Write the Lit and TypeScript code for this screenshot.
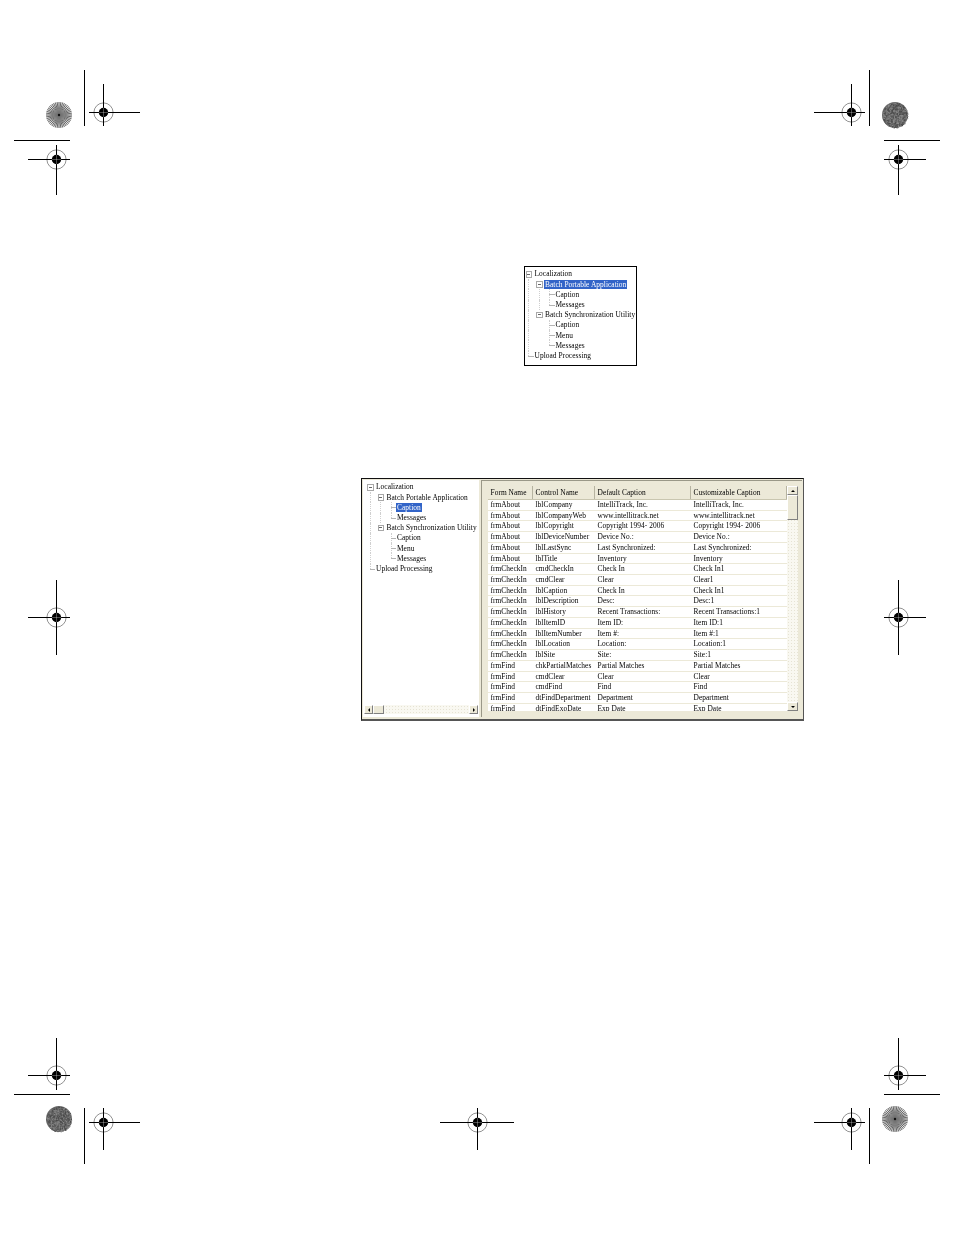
import { LitElement, html, css, svg } from "lit";
import { customElement, property } from "lit/decorators.js";

type Cell = "v" | "t" | "l" | "box" | "e";
interface TreeRow { cells: Cell[]; label: string; sel?: boolean; }

const cols = (sel: "portable" | "caption"): TreeRow[] => [
  { cells: ["box"], label: "Localization" },
  { cells: ["v", "box"], label: "Batch Portable Application", sel: sel === "portable" },
  { cells: ["v", "v", "t"], label: "Caption", sel: sel === "caption" },
  { cells: ["v", "v", "l"], label: "Messages" },
  { cells: ["v", "box"], label: "Batch Synchronization Utility" },
  { cells: ["v", "e", "t"], label: "Caption" },
  { cells: ["v", "e", "t"], label: "Menu" },
  { cells: ["v", "e", "l"], label: "Messages" },
  { cells: ["l"], label: "Upload Processing" },
];

@customElement("tree-view")
class TreeView extends LitElement {
  @property({ attribute: false }) rows: TreeRow[] = [];
  static styles = css`
    :host { display: block; font: 7.4px/10.2px "Liberation Serif", serif; color: #000; white-space: nowrap; letter-spacing: .05px; }
    .row { display: flex; height: 10.2px; align-items: center; }
    .cell { width: 10.5px; height: 100%; flex: none; position: relative; }
    .cell::before, .cell::after { content: ""; position: absolute; }
    .v::before, .t::before { left: 5px; top: 0; bottom: 0; border-left: 1px dotted #cfcfcf; }
    .l::before { left: 5px; top: 0; height: 50%; border-left: 1px dotted #cfcfcf; }
    .t::after, .l::after { left: 5px; right: 0; top: 50%; border-top: 1px solid #b4b4b4; }
    .box::before { left: 2.5px; top: 2px; width: 4.5px; height: 4.5px; border: .7px solid #a8a8a8; background: #fff; }
    .box::after { left: 4px; top: 4.6px; width: 3px; height: .8px; background: #666; }
    .label { padding: 0 1px; line-height: 9.4px; }
    .sel { background: #3264c8; color: #fff; }
  `;
  render() {
    return this.rows.map(r => html`<div class="row">
      ${r.cells.map(c => html`<span class="cell ${c}"></span>`)}
      <span class="label ${r.sel ? "sel" : ""}">${r.label}</span>
    </div>`);
  }
}

const DATA: string[][] = [
  ["frmAbout", "lblCompany", "IntelliTrack, Inc.", "IntelliTrack, Inc."],
  ["frmAbout", "lblCompanyWeb", "www.intellitrack.net", "www.intellitrack.net"],
  ["frmAbout", "lblCopyright", "Copyright 1994- 2006", "Copyright 1994- 2006"],
  ["frmAbout", "lblDeviceNumber", "Device No.:", "Device No.:"],
  ["frmAbout", "lblLastSync", "Last Synchronized:", "Last Synchronized:"],
  ["frmAbout", "lblTitle", "Inventory", "Inventory"],
  ["frmCheckIn", "cmdCheckIn", "Check In", "Check In1"],
  ["frmCheckIn", "cmdClear", "Clear", "Clear1"],
  ["frmCheckIn", "lblCaption", "Check In", "Check In1"],
  ["frmCheckIn", "lblDescription", "Desc:", "Desc:1"],
  ["frmCheckIn", "lblHistory", "Recent Transactions:", "Recent Transactions:1"],
  ["frmCheckIn", "lblItemID", "Item ID:", "Item ID:1"],
  ["frmCheckIn", "lblItemNumber", "Item #:", "Item #:1"],
  ["frmCheckIn", "lblLocation", "Location:", "Location:1"],
  ["frmCheckIn", "lblSite", "Site:", "Site:1"],
  ["frmFind", "chkPartialMatches", "Partial Matches", "Partial Matches"],
  ["frmFind", "cmdClear", "Clear", "Clear"],
  ["frmFind", "cmdFind", "Find", "Find"],
  ["frmFind", "dtFindDepartment", "Department", "Department"],
  ["frmFind", "dtFindExoDate", "Exp Date", "Exp Date"],
];

@customElement("print-marks")
class PrintMarks extends LitElement {
  static styles = css`
    :host { position: absolute; inset: 0; pointer-events: none; }
    svg { display: block; }
  `;
  reg(cx: number, cy: number, x1: number, x2: number, y1: number, y2: number) {
    return svg`
      <circle cx=${cx} cy=${cy} r="9.6" fill="none" stroke="#777" stroke-width=".8"/>
      <circle cx=${cx} cy=${cy} r="4.7" fill="#000"/>
      <path d="M${x1} ${cy}H${x2}M${cx} ${y1}V${y2}" stroke="#000" stroke-width="1" fill="none"/>
      <path d="M${cx - 4.7} ${cy}H${cx + 4.7}M${cx} ${cy - 4.7}V${cy + 4.7}" stroke="#fff" stroke-width=".3" fill="none"/>`;
  }
  spokes(cx: number, cy: number) {
    const out = [];
    const n = 44;
    for (let i = 0; i < n; i++) {
      const a = (i / n) * Math.PI * 2;
      const x = cx + Math.cos(a) * 13, y = cy + Math.sin(a) * 13;
      out.push(svg`<line x1=${cx} y1=${cy} x2=${x} y2=${y} stroke="#303030" stroke-width=".7"/>`);
    }
    return svg`<circle cx=${cx} cy=${cy} r="13" fill="#e6e6e6"/>${out}
      <circle cx=${cx} cy=${cy} r="6.5" fill="#8c8c8c" opacity=".7"/>
      <circle cx=${cx} cy=${cy} r="1.2" fill="#111"/>`;
  }
  speckle(cx: number, cy: number, seed: number) {
    const out = [];
    let s = seed;
    const rnd = () => (s = (s * 9301 + 49297) % 233280) / 233280;
    for (let i = 0; i < 420; i++) {
      const a = rnd() * Math.PI * 2, r = Math.sqrt(rnd()) * 12.6;
      const x = cx + Math.cos(a) * r, y = cy + Math.sin(a) * r;
      const c = rnd() > 0.5 ? "#484848" : "#8a8a8a";
      out.push(svg`<rect x=${x} y=${y} width="1" height="1" fill=${c}/>`);
    }
    return svg`<circle cx=${cx} cy=${cy} r="13" fill="#676767"/>${out}`;
  }
  render() {
    return html`<svg width="954" height="1235" viewBox="0 0 954 1235">
      <path stroke="#000" stroke-width="1" fill="none" d="M84.5 70V126M869.5 70V126M14 140.5H70M884 140.5H940M14 1094.5H70M884 1094.5H940M84.5 1108V1164M869.5 1108V1164"/>
      ${this.spokes(59, 115)}
      ${this.speckle(895, 115, 17)}
      ${this.speckle(59, 1119, 91)}
      ${this.spokes(895, 1119)}
      ${this.reg(103.5, 112.5, 89, 140, 84, 126)}
      ${this.reg(851.5, 112.5, 814, 865, 84, 126)}
      ${this.reg(56.5, 159.5, 28, 70, 145, 195)}
      ${this.reg(898.5, 159.5, 884, 926, 145, 195)}
      ${this.reg(56.5, 617.5, 28, 70, 580, 655)}
      ${this.reg(898.5, 617.5, 884, 926, 580, 655)}
      ${this.reg(56.5, 1075.5, 28, 70, 1038, 1090)}
      ${this.reg(898.5, 1075.5, 884, 926, 1038, 1090)}
      ${this.reg(103.5, 1122.5, 89, 140, 1108, 1150)}
      ${this.reg(477.5, 1122.5, 440, 514, 1108, 1150)}
      ${this.reg(851.5, 1122.5, 814, 865, 1108, 1150)}
    </svg>`;
  }
}

@customElement("app-root")
class AppRoot extends LitElement {
  static styles = css`
    :host { display: block; position: relative; height: 1235px; background: #fff; overflow: hidden; font-family: "Liberation Serif", serif; }
    .page { padding-top: 266px; }
    .small { margin-left: 524px; width: 113px; height: 100px; box-sizing: border-box; border: 1px solid #000; padding-top: 2px; background: #fff; filter: blur(.3px); }
    .small tree-view { margin-left: -2px; }
    .win { margin: 112px 0 0 361px; width: 443px; height: 243px; box-sizing: border-box; background: #ece9d8; filter: blur(.3px);
      border-style: solid; border-width: 1px 1px 2px 1px; border-color: #111 #555 #555 #111; display: grid; grid-template-columns: 116px 1fr; grid-template-rows: minmax(0, 1fr); padding: 1px 1px 2px 1px; }
    .left { background: #fff; display: flex; flex-direction: column; min-height: 0; padding-top: 2px; }
    .left tree-view { flex: 1; padding-left: 1.5px; }
    .hbar { height: 9px; margin: 0 1px 3px 1px; display: flex; background: #f9f8f1; background-image: radial-gradient(#e6e3d4 .5px, transparent .6px); background-size: 3px 3px; }
    .btn { width: 9px; height: 9px; flex: none; box-sizing: border-box; background: #ece9d8; border: .7px solid; border-color: #fff #808080 #808080 #fff; display: flex; align-items: center; justify-content: center; }
    .thumb { width: 11px; height: 9px; flex: none; box-sizing: border-box; background: #ece9d8; border: .7px solid; border-color: #fff #808080 #808080 #fff; }
    .hbar .spacer { flex: 1; }
    .tri { width: 0; height: 0; border: 2px solid transparent; }
    .tl { border-right-color: #000; border-left-width: 0; }
    .tr { border-left-color: #000; border-right-width: 0; }
    .tu { border-bottom-color: #000; border-top-width: 0; }
    .td { border-top-color: #000; border-bottom-width: 0; }
    .right { margin-left: 2px; border-left: 1px solid #9a9888; border-top: 1px solid #9a9888; padding: 5px 4px 6px 6px; min-height: 0; display: flex; box-sizing: border-box; }
    .list { flex: 1; min-width: 0; background: #fff; overflow: hidden; font-size: 7.4px; letter-spacing: .05px; color: #000; }
    .tr-row { display: grid; grid-template-columns: 45px 62px 96px 96px; height: 10.72px; box-sizing: border-box; border-bottom: 1px solid #ece9d8; line-height: 10px; white-space: nowrap; }
    .tr-row span { padding-left: 2.5px; overflow: hidden; }
    .head { height: 14px; background: #ece9d8; border-bottom: 1px solid #c9c6b0; line-height: 14px; }
    .head span { border-right: 1px solid #b6b3a0; }
    .vbar { width: 11px; flex: none; display: flex; flex-direction: column; background: #f9f8f1; background-image: radial-gradient(#e6e3d4 .5px, transparent .6px); background-size: 3px 3px; }
    .vbar .btn { width: 11px; }
    .vbar .thumb { width: 11px; height: 25px; }
    .vbar .spacer { flex: 1; }
  `;
  render() {
    return html`<div class="page">
      <div class="small"><tree-view .rows=${cols("portable")}></tree-view></div>
      <div class="win">
        <div class="left">
          <tree-view .rows=${cols("caption")}></tree-view>
          <div class="hbar">
            <span class="btn"><i class="tri tl"></i></span><span class="thumb"></span><span class="spacer"></span><span class="btn"><i class="tri tr"></i></span>
          </div>
        </div>
        <div class="right">
          <div class="list">
            <div class="tr-row head"><span>Form Name</span><span>Control Name</span><span>Default Caption</span><span>Customizable Caption</span></div>
            ${DATA.map(r => html`<div class="tr-row">${r.map(c => html`<span>${c}</span>`)}</div>`)}
          </div>
          <div class="vbar">
            <span class="btn"><i class="tri tu"></i></span><span class="thumb"></span><span class="spacer"></span><span class="btn"><i class="tri td"></i></span>
          </div>
        </div>
      </div>
    </div>
    <print-marks></print-marks>`;
  }
}
